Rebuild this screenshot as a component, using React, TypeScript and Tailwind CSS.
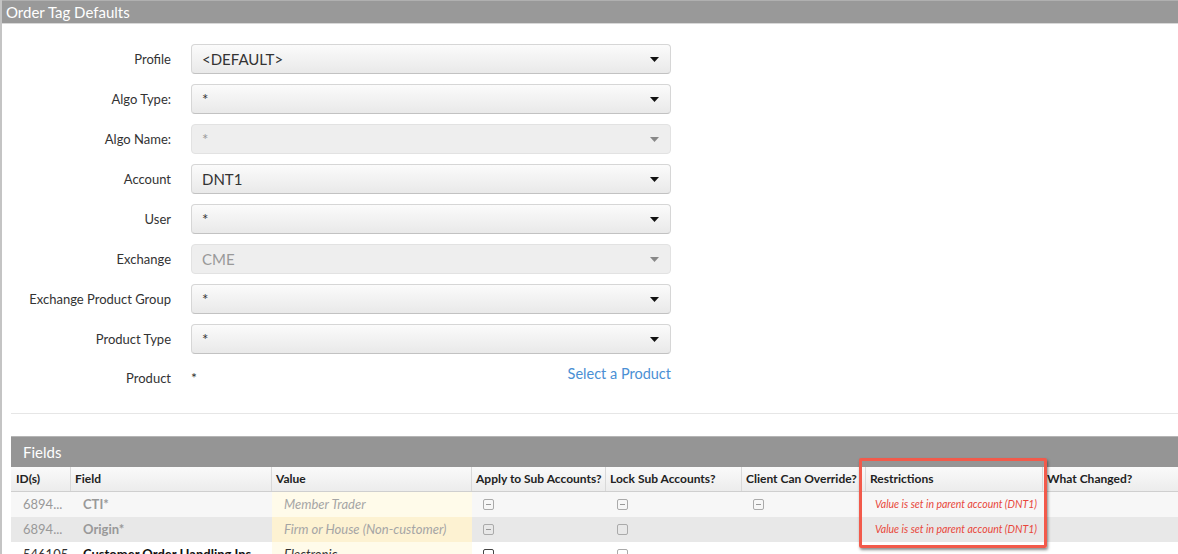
import React from 'react'

type SelectProps = { value: string; disabled?: boolean }

function Caret({ disabled }: { disabled?: boolean }) {
  return (
    <svg width="9" height="5" viewBox="0 0 9 5" className="shrink-0">
      <path d="M0 0h9L4.5 5z" fill={disabled ? '#888' : '#111'} />
    </svg>
  )
}

function Select({ value, disabled }: SelectProps) {
  return (
    <div
      className={
        'flex h-[30px] w-[480px] items-center justify-between rounded-[4px] border pl-[10px] pr-[11px] text-[15px] ' +
        (disabled
          ? 'border-[#e2e2e2] bg-[#eeeeee] text-[#999]'
          : 'border-[#d6d6d6] border-b-[#c2c2c2] bg-gradient-to-b from-[#fbfbfb] to-[#e9e9e9] text-[#333]')
      }
    >
      <span>{value}</span>
      <Caret disabled={disabled} />
    </div>
  )
}

const formRows: { label: string; value: string; disabled?: boolean }[] = [
  { label: 'Profile', value: '<DEFAULT>' },
  { label: 'Algo Type:', value: '*' },
  { label: 'Algo Name:', value: '*', disabled: true },
  { label: 'Account', value: 'DNT1' },
  { label: 'User', value: '*' },
  { label: 'Exchange', value: 'CME', disabled: true },
  { label: 'Exchange Product Group', value: '*' },
  { label: 'Product Type', value: '*' },
]

const cols = 'grid grid-cols-[60px_201px_200px_134px_136px_124px_177px_1fr]'

function Check({ minus, dark }: { minus?: boolean; dark?: boolean }) {
  return (
    <span
      className={
        'relative inline-block h-[11px] w-[11px] rounded-[2px] border ' +
        (dark ? 'border-[#444]' : 'border-[#aaa]')
      }
    >
      {minus && <span className="absolute left-[2px] right-[2px] top-[4px] h-px bg-[#999]" />}
    </span>
  )
}

type Mark = 'minus' | 'box' | 'dark'

type Row = {
  id: string
  field: string
  value: string
  apply?: Mark
  lock?: Mark
  client?: Mark
  restriction?: string
  muted: boolean
  bg: string
  valueBg: string
}

const rows: Row[] = [
  {
    id: '6894...',
    field: 'CTI*',
    value: 'Member Trader',
    apply: 'minus',
    lock: 'minus',
    client: 'minus',
    restriction: 'Value is set in parent account (DNT1)',
    muted: true,
    bg: 'bg-[#f7f7f7]',
    valueBg: 'bg-[#fffbea]',
  },
  {
    id: '6894...',
    field: 'Origin*',
    value: 'Firm or House (Non-customer)',
    apply: 'minus',
    lock: 'box',
    restriction: 'Value is set in parent account (DNT1)',
    muted: true,
    bg: 'bg-[#e8e8e8]',
    valueBg: 'bg-[#fdf2d2]',
  },
  {
    id: '546105',
    field: 'Customer Order Handling Ins...',
    value: 'Electronic',
    apply: 'dark',
    lock: 'box',
    muted: false,
    bg: 'bg-white',
    valueBg: 'bg-[#fffbea]',
  },
]

function CheckCell({ kind }: { kind?: Mark }) {
  return (
    <div className="flex items-center pl-[11px]">
      {kind && <Check minus={kind === 'minus'} dark={kind === 'dark'} />}
    </div>
  )
}

export default function App() {
  return (
    <div className="min-h-screen border-l-2 border-[#c4c4c4] bg-white font-[family-name:Lato,sans-serif] text-[#333]">
      {/* Panel title */}
      <div className="flex h-[24px] items-center border-t border-[#b0b0b0] border-b border-b-[#d8d8d8] bg-[#999999] pl-[4px] text-[15px] text-white">
        Order Tag Defaults
      </div>

      {/* Filter form */}
      <div className="flex flex-col gap-[10px] pt-[20px]">
        {formRows.map((r) => (
          <div key={r.label} className="flex items-center gap-[20px]">
            <div className="w-[169px] pt-px text-right text-[13px] text-[#333]">{r.label}</div>
            <Select value={r.value} disabled={r.disabled} />
          </div>
        ))}
        <div className="flex h-[30px] items-center gap-[20px]">
          <div className="w-[169px] text-right text-[13px] text-[#333]">Product</div>
          <div className="flex w-[480px] items-center justify-between">
            <span className="pb-[3px] text-[14px]">*</span>
            <span className="mb-[10px] text-[14.5px] text-[#4a8fd4]">Select a Product</span>
          </div>
        </div>
      </div>

      <div className="ml-[9px] mt-[19px] h-px bg-[#e6e6e6]" />

      {/* Fields table */}
      <div className="relative ml-[9px] mt-[22px]">
        <div className="flex h-[31px] items-center border-t border-[#b5b5b5] bg-[#959595] pl-[12px] text-[15px] text-white">
          Fields
        </div>
        <div className={cols + ' h-[25px] border-b border-[#cfcfcf] bg-gradient-to-b from-[#fafafa] to-[#ececec] text-[12px] font-bold text-[#222]'}>
          {['ID(s)', 'Field', 'Value', 'Apply to Sub Accounts?', 'Lock Sub Accounts?', 'Client Can Override?', 'Restrictions', 'What Changed?'].map(
            (h, i) => (
              <div
                key={h}
                className={
                  'flex items-center whitespace-nowrap ' +
                  (i === 0 ? 'pl-[5px] ' : 'pl-[4px] ') +
                  (i < 7 ? 'border-r border-[#d9d9d9]' : '')
                }
              >
                {h}
              </div>
            )
          )}
        </div>
        {rows.map((r, i) => (
          <div key={i} className={cols + ' h-[25px] text-[13px] ' + r.bg}>
            <div className={'flex items-center pl-[12px] ' + (r.muted ? 'text-[#999]' : 'text-[#333]')}>{r.id}</div>
            <div className={'flex items-center whitespace-nowrap pl-[12px] font-bold ' + (r.muted ? 'text-[#999]' : 'text-[#111]')}>
              {r.field}
            </div>
            <div className={'flex items-center pl-[12px] italic ' + r.valueBg + (r.muted ? ' text-[#a5a5a5]' : ' text-[#333]')}>
              {r.value}
            </div>
            <CheckCell kind={r.apply} />
            <CheckCell kind={r.lock} />
            <CheckCell kind={r.client} />
            <div className="flex items-center justify-end pr-[6px] text-[10.5px] italic text-[#e8463a]">{r.restriction}</div>
            <div />
          </div>
        ))}

        {/* Highlight box around the Restrictions column */}
        <div className="pointer-events-none absolute left-[848px] top-[22px] h-[90px] w-[188px] rounded-[2px] border-[3px] border-[#f25a4b] shadow-[1px_2px_3px_rgba(0,0,0,0.45)]" />
      </div>
    </div>
  )
}
